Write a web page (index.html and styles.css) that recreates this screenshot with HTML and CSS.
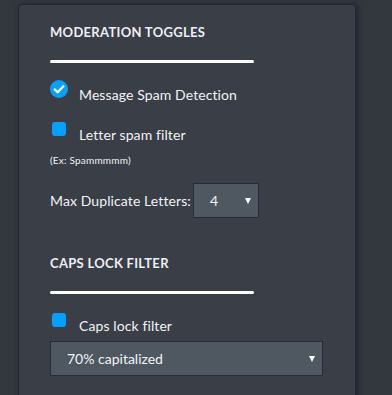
FILE: index.html
```html
<!DOCTYPE html>
<html>
<head>
<meta charset="utf-8">
<link rel="stylesheet" href="styles.css">
</head>
<body>
<div class="card">
  <h2 class="title">MODERATION TOGGLES</h2>
  <div class="rule"></div>
  <div class="row row-first">
    <span class="icon"><svg class="circle" width="18" height="18" viewBox="0 0 18 18"><circle cx="9" cy="9" r="9" fill="#0aa0f6"/><path d="M4.6 9.4 L7.6 12.2 L13.4 6.2" fill="none" stroke="#fff" stroke-width="2.2" stroke-linecap="round" stroke-linejoin="round"/></svg></span>
    <span class="label">Message Spam Detection</span>
  </div>
  <div class="row row-next">
    <span class="icon"><span class="box"></span></span>
    <span class="label">Letter spam filter</span>
  </div>
  <p class="hint">(Ex: Spammmmm)</p>
  <div class="dup">
    <span class="dup-label">Max Duplicate Letters:</span>
    <div class="select select-small"><span>4</span><span class="arrow"></span></div>
  </div>
  <h2 class="title title-second">CAPS LOCK FILTER</h2>
  <div class="rule"></div>
  <div class="row row-first">
    <span class="icon"><span class="box"></span></span>
    <span class="label">Caps lock filter</span>
  </div>
  <div class="select select-wide"><span>70% capitalized</span><span class="arrow"></span></div>
</div>
</body>
</html>
```
FILE: styles.css
```css
html, body {
  margin: 0;
  padding: 0;
  background: #33373e;
  height: 100%;
  overflow: hidden;
}
body {
  font-family: Lato, "Open Sans", sans-serif;
  color: #f1f2f5;
}
.card {
  box-sizing: border-box;
  margin: 4px 0 0 18px;
  width: 338px;
  height: 396px;
  background: #3a3f47;
  border: 1px solid #222639;
  border-radius: 4px;
  box-shadow: 2px 0 6px rgba(0, 0, 0, 0.35);
  padding: 19px 0 0 31px;
}
.title {
  margin: 0;
  font-size: 13px;
  line-height: 16px;
  font-weight: 700;
  letter-spacing: 0.3px;
  color: #eceef2;
}
.title-second {
  margin-top: 37px;
}
.rule {
  margin-top: 20px;
  width: 204px;
  height: 3px;
  border-radius: 2px;
  background: #ffffff;
}
.row {
  display: flex;
  align-items: flex-start;
  gap: 11px;
}
.row-first {
  margin-top: 17px;
}
.row-next {
  margin-top: 16px;
}
.icon {
  width: 18px;
  height: 18px;
  display: flex;
  align-items: center;
  justify-content: center;
  flex: none;
}
.circle {
  display: block;
}
.box {
  width: 14px;
  height: 14px;
  border-radius: 3px;
  background: #05a0fb;
}
.label {
  padding-top: 6px;
  font-size: 14px;
  line-height: 18px;
  letter-spacing: 0.1px;
}
.hint {
  margin: 10px 0 0;
  font-size: 10px;
  line-height: 12px;
  letter-spacing: 0.2px;
}
.dup {
  margin-top: 17px;
  display: flex;
  align-items: center;
  gap: 2px;
}
.dup-label {
  font-size: 14px;
  line-height: 18px;
  letter-spacing: 0.1px;
}
.select {
  box-sizing: border-box;
  height: 35px;
  display: flex;
  align-items: center;
  justify-content: space-between;
  background: #4f5861;
  border: 1px solid #262b3e;
  font-size: 14px;
  color: #f2f3f5;
}
.select-small {
  width: 66px;
  padding: 0 7px 0 16px;
}
.select-wide {
  margin-top: 6px;
  width: 273px;
  padding: 0 7px 0 16px;
}
.arrow {
  width: 0;
  height: 0;
  border-left: 3px solid transparent;
  border-right: 3px solid transparent;
  border-top: 6px solid #ffffff;
}
```
